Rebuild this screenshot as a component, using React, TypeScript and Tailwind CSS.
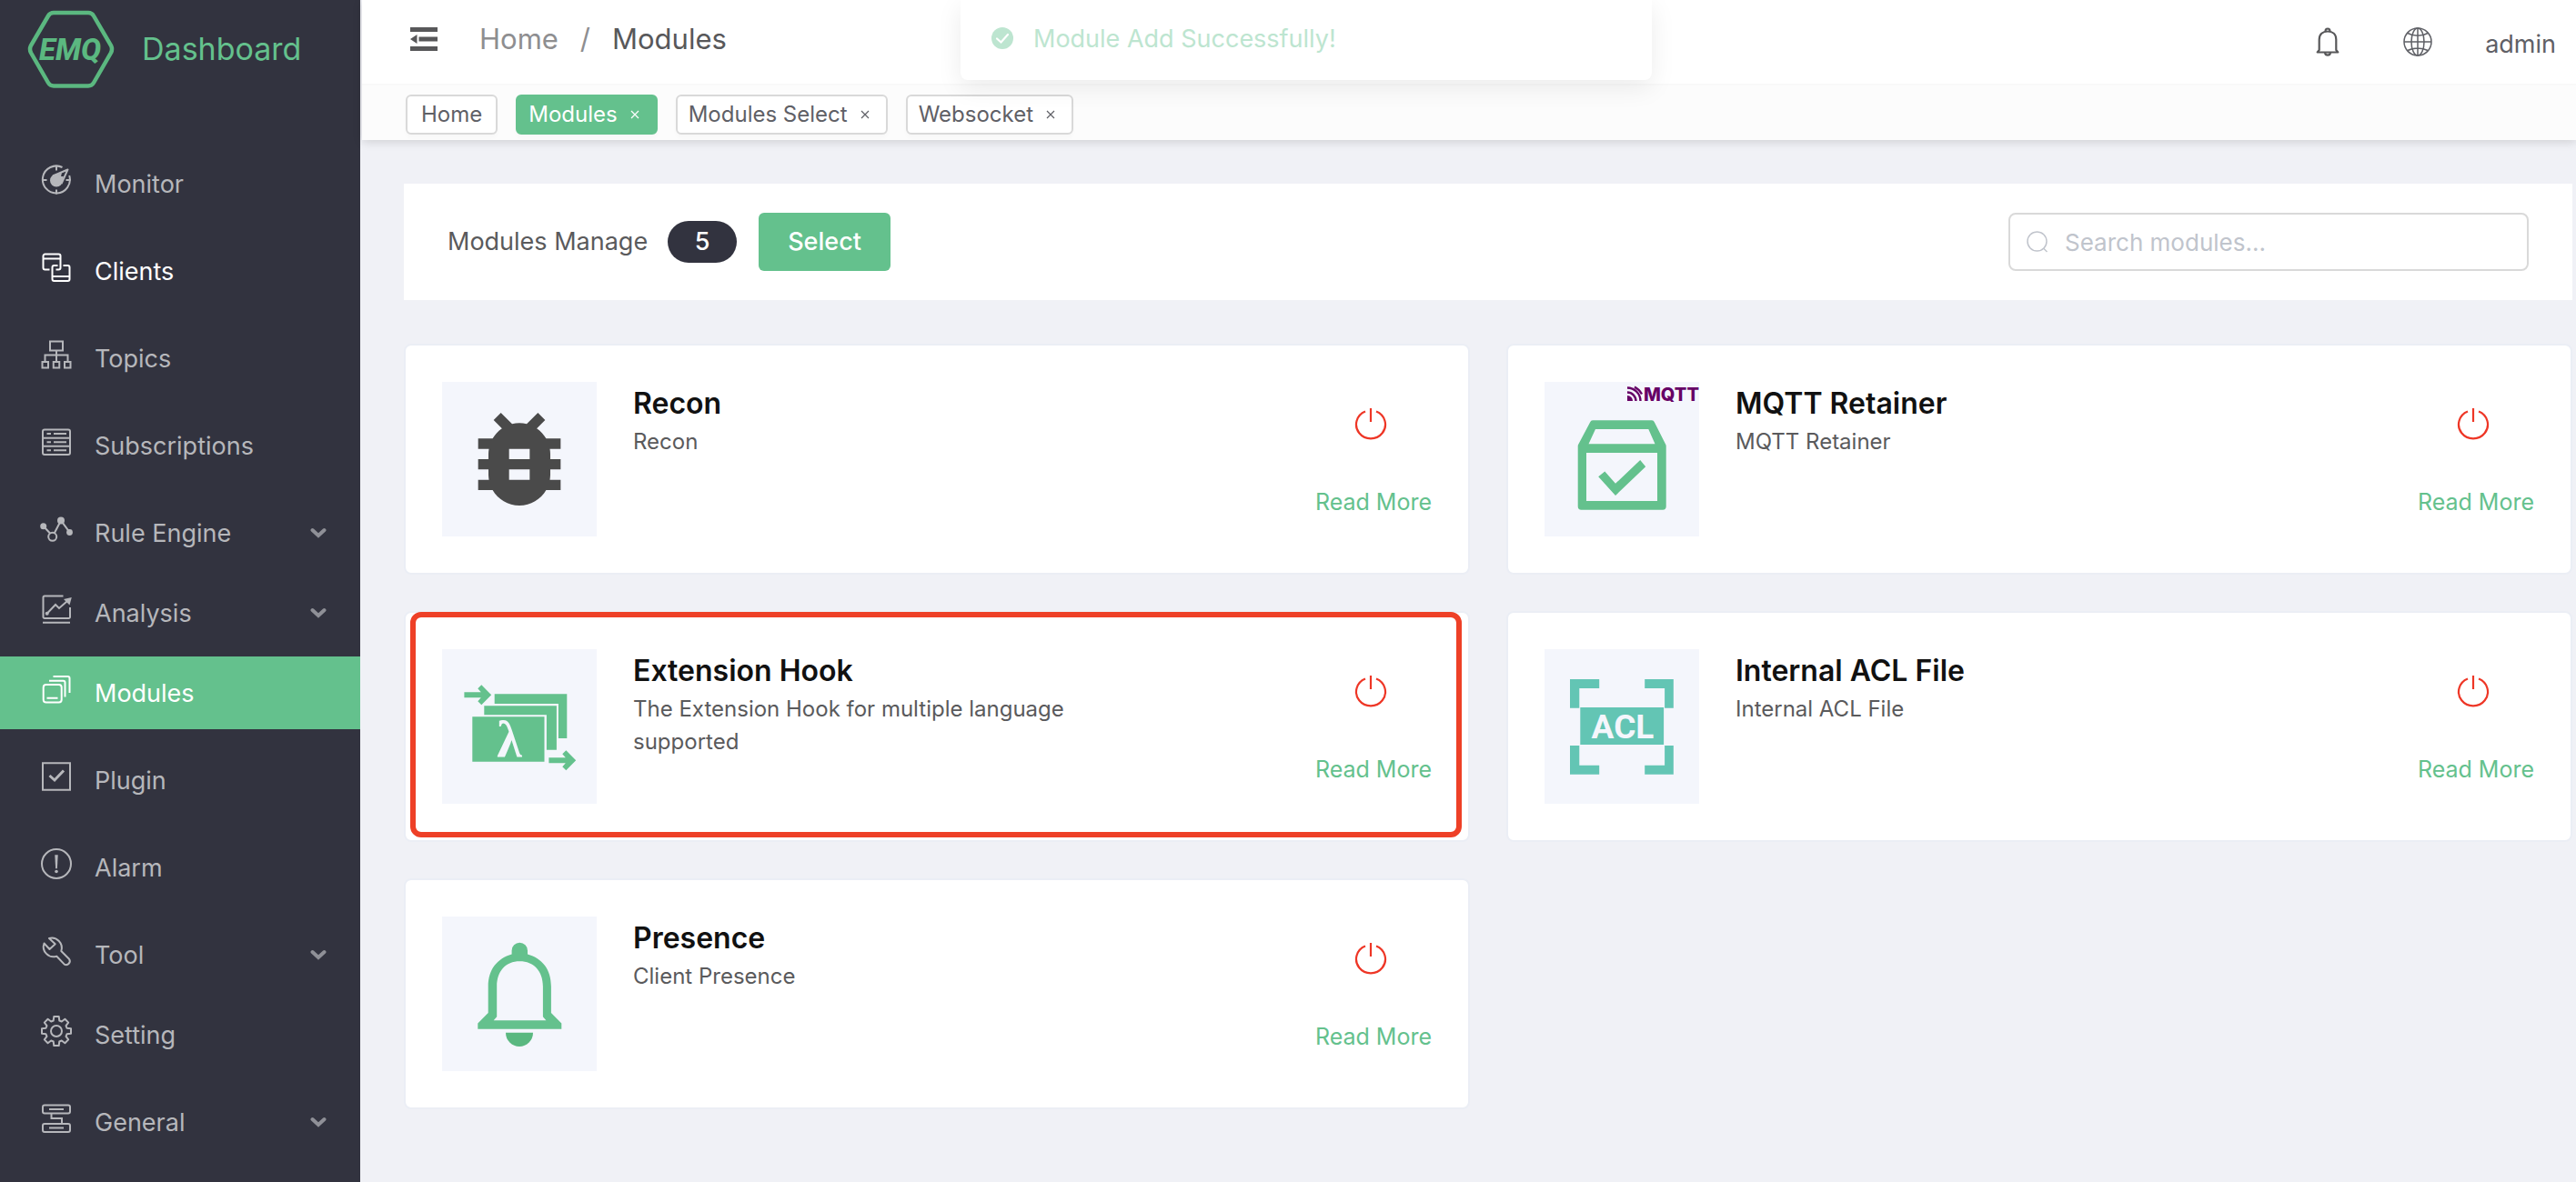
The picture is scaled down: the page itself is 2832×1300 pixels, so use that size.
import React from 'react';

type IconProps = { className?: string };

function Glyph({ children }: { children: React.ReactNode }) {
  return (
    <svg viewBox="0 0 36 36" className="mb-2 size-9 shrink-0" fill="none" stroke="currentColor" strokeWidth="2" aria-hidden="true">
      {children}
    </svg>
  );
}

const MonitorIcon = () => (
  <Glyph>
    <path d="M24.5 4A15 15 0 1 0 32.2 13" />
    <path d="M18 2.5v5M18 28.5v5M2.5 18h5M28.5 18h5" />
    <path d="M14 13.5 30.5 6.5 23.5 22" strokeLinejoin="round" />
    <circle cx="18" cy="18.5" r="6" fill="currentColor" />
    <path d="M19 12l5 -2 -1 4 3 0 -2 6z" fill="currentColor" stroke="none" />
  </Glyph>
);

const ClientsIcon = () => (
  <Glyph>
    <path d="M10.5 20.5H5.5a2 2 0 0 1-2-2V5.5a2 2 0 0 1 2-2h15a2 2 0 0 1 2 2v13a2 2 0 0 1-2 2h-3" />
    <path d="M3.5 8.5h19" />
    <path d="M25.5 16h5a2 2 0 0 1 2 2v13a2 2 0 0 1-2 2h-15a2 2 0 0 1-2-2V18a2 2 0 0 1 2-2h4" />
    <path d="M13.5 28h19" />
  </Glyph>
);

const TopicsIcon = () => (
  <Glyph>
    <path d="M11 3.5h14v10H11zM18 13.5v12M5.5 25.5v-7h25v7" />
    <path d="M2.5 26h6.5v6.5H2.5zM14.75 26h6.5v6.5h-6.5zM27 26h6.5v6.5H27z" />
  </Glyph>
);

const SubscriptionsIcon = () => (
  <Glyph>
    <rect x="3" y="4.5" width="30" height="27.5" rx="2" />
    <path d="M3 13.7h30M3 22.8h30" />
    <path d="M7.5 9h4.5M15 9h14M7.5 18.2h4.5M15 18.2h14M7.5 27.3h4.5M15 27.3h14" />
  </Glyph>
);

const RuleIcon = () => (
  <Glyph>
    <path d="M3.7 14.7 11 22.5M15.7 22.5 23 8.5 32.7 21.7" />
    <circle cx="13.7" cy="26.3" r="4.5" />
    <circle cx="3.7" cy="14.7" r="3.5" fill="currentColor" stroke="none" />
    <circle cx="23" cy="8.5" r="4" fill="currentColor" stroke="none" />
    <circle cx="32.5" cy="21.5" r="3.4" fill="currentColor" stroke="none" />
  </Glyph>
);

const AnalysisIcon = () => (
  <Glyph>
    <path d="M25.5 3.5H5a1.5 1.5 0 0 0-1.5 1.5v21.5A1.5 1.5 0 0 0 5 28h26.5a1.5 1.5 0 0 0 1.5-1.5V16M3 32.8h30" />
    <path d="M7.5 23 17 13l4 4 9-8" />
    <circle cx="7.7" cy="22.8" r="2" fill="currentColor" stroke="none" />
    <path d="M34.8 5 32.5 13.5 26 7z" fill="currentColor" stroke="none" />
  </Glyph>
);

const ModulesIcon = () => (
  <Glyph>
    <rect x="3.7" y="13" width="20" height="19.5" rx="3" />
    <path d="M7.5 27.7h12M10 8.7h15.5a2 2 0 0 1 2 2V26.5M14.5 4h16a2 2 0 0 1 2 2v16" />
  </Glyph>
);

const PluginIcon = () => (
  <Glyph>
    <path d="M3 3.3h30v29.5H3z" />
    <path d="M10.5 17l5.5 5 10-10.5" strokeWidth="3" />
  </Glyph>
);

const AlarmIcon = () => (
  <Glyph>
    <circle cx="18" cy="18" r="16" />
    <path d="M16.3 8.2h3.4L18.9 23.2h-1.8z" fill="currentColor" stroke="none" />
    <circle cx="18" cy="26.5" r="1.8" fill="currentColor" stroke="none" />
  </Glyph>
);

const ToolIcon = () => (
  <Glyph>
    <path
      d="M4.5 9.5 10.5 16 16.7 10.3 10 4A11 11 0 0 1 23.3 18L32 26.8A4 4 0 0 1 26.8 32.6L18.3 23.7A11 11 0 0 1 4.5 9.5Z"
      strokeLinejoin="round"
    />
  </Glyph>
);

function gearPath() {
  const points: string[] = [];
  for (let i = 0; i < 8; i += 1) {
    const a = (i * Math.PI) / 4 - Math.PI / 2;
    const at = (r: number, d: number) =>
      (18 + r * Math.cos(a + d)).toFixed(1) + ' ' + (18 + r * Math.sin(a + d)).toFixed(1);
    points.push(at(12, -0.28), at(16.2, -0.17), at(16.2, 0.17), at(12, 0.28));
  }
  return 'M' + points.join('L') + 'Z';
}

const SettingIcon = () => (
  <Glyph>
    <path d={gearPath()} strokeLinejoin="round" />
    <circle cx="18" cy="18" r="6" />
  </Glyph>
);

const GeneralIcon = () => (
  <Glyph>
    <rect x="3" y="3.5" width="30" height="9" rx="2" />
    <rect x="3" y="24" width="30" height="9" rx="2" />
    <path d="M10 8h16M10 28.5h16M12.5 12.5v5.5h11.5v6" />
  </Glyph>
);

const Chevron = () => (
  <svg viewBox="0 0 18 12" className="ml-auto h-3 w-[18px]" fill="none" stroke="#8f9097" strokeWidth="4" aria-hidden="true">
    <path d="M2.5 3 9 9l6.5-6" strokeLinecap="round" />
  </svg>
);

const MENU = [
  { label: 'Monitor', Icon: MonitorIcon },
  { label: 'Clients', Icon: ClientsIcon, hover: true },
  { label: 'Topics', Icon: TopicsIcon },
  { label: 'Subscriptions', Icon: SubscriptionsIcon },
  { label: 'Rule Engine', Icon: RuleIcon, sub: true },
  { label: 'Analysis', Icon: AnalysisIcon, sub: true },
  { label: 'Modules', Icon: ModulesIcon, active: true },
  { label: 'Plugin', Icon: PluginIcon },
  { label: 'Alarm', Icon: AlarmIcon },
  { label: 'Tool', Icon: ToolIcon, sub: true },
  { label: 'Setting', Icon: SettingIcon },
  { label: 'General', Icon: GeneralIcon, sub: true },
];

function Sidebar() {
  return (
    <aside className="w-[396px] shrink-0 bg-[#32333f]">
      <div className="mb-[54px] flex h-[108px] items-center gap-[30px] pl-[30px]">
        <svg viewBox="0 0 96 88" className="h-[88px] w-24" aria-label="EMQ" role="img">
          <path
            d="M29 4H67Q71 4 73 7.5L92 40Q94 44 92 48L73 81Q71 84.5 67 84.5H29Q25 84.5 23 81L4 48Q2 44 4 40L23 7.5Q25 4 29 4Z"
            fill="none"
            stroke="#5bb880"
            strokeWidth="4.5"
          />
          <text x="47" y="56" textAnchor="middle" fontSize="33" fontWeight="800" fontStyle="italic" fill="#5bb880" style={{ fontFamily: 'Roboto, sans-serif' }}>
            EMQ
          </text>
        </svg>
        <span className="text-[34px] leading-10 text-[#64c18d]">Dashboard</span>
      </div>
      <nav>
        <ul>
          {MENU.map(({ label, Icon, sub, active, hover }) => (
            <li key={label} className={sub ? 'mb-2' : 'mb-4'}>
              <a
                href="#"
                className={
                  'flex h-20 items-center gap-6 pr-[37px] pl-11 text-[27px] ' +
                  (active ? 'bg-[#64c18d] text-white' : hover ? 'text-white' : 'text-[#b6b7bb]')
                }
              >
                <Icon />
                <span className="pt-0.5">{label}</span>
                {sub && <Chevron />}
              </a>
            </li>
          ))}
        </ul>
      </nav>
    </aside>
  );
}

const Cross = () => (
  <svg viewBox="0 0 10 10" className="size-2.5" fill="none" stroke="currentColor" strokeWidth="1.2" aria-hidden="true">
    <path d="M1 1l8 8M9 1 1 9" />
  </svg>
);

const TABS = [
  { label: 'Home', closable: false, active: false },
  { label: 'Modules', closable: true, active: true },
  { label: 'Modules Select', closable: true, active: false },
  { label: 'Websocket', closable: true, active: false },
];

function Header() {
  return (
    <header className="relative z-10 ml-0.5 shadow-[0_2px_10px_rgba(0,0,0,0.14)]">
      <div className="flex h-[92px] items-center bg-white pr-[22px] pl-[53px] text-[#55565a]">
        <div className="flex items-center pb-1.5">
          <button aria-label="Collapse menu" className="mr-[46px]">
            <svg viewBox="0 0 30 26" className="h-[26px] w-[30px]" fill="#58585a" aria-hidden="true">
              <path d="M0 0h30v5H0zM9.5 10.5H30v5H9.5zM0 21h30v5H0zM7.5 8v10L0 13z" />
            </svg>
          </button>
          <nav className="flex items-center text-[31px] leading-10" aria-label="Breadcrumb">
            <a href="#" className="text-[#8e8e90]">Home</a>
            <span className="mx-6 text-[#8e8e90]">/</span>
            <span className="text-[#58585a]">Modules</span>
          </nav>
        </div>
        <button aria-label="Notifications" className="ml-auto">
          <svg viewBox="0 0 26 32" className="h-8 w-[26px]" fill="none" stroke="#58585a" strokeWidth="2.2" aria-hidden="true">
            <path d="M3.7 25V13.5C3.7 7.5 7.5 4.5 13 4.5s9.3 3 9.3 9V25l2 2.5H1.7z" strokeLinejoin="round" />
            <path d="M10.5 4.5c0-4 5-4 5 0M10 28c.5 3.5 5.5 3.5 6 0" />
          </svg>
        </button>
        <button aria-label="Language" className="ml-[70px]">
          <svg viewBox="0 0 32 32" className="size-8" fill="none" stroke="#5f6066" strokeWidth="1.5" aria-hidden="true">
            <circle cx="16" cy="16" r="15" />
            <ellipse cx="16" cy="16" rx="7" ry="15" />
            <path d="M16 1v30M1 16h30M5 6.5c6 3.5 16 3.5 22 0M5 25.5c6-3.5 16-3.5 22 0" />
          </svg>
        </button>
        <button className="ml-[58px] pt-1.5 text-[27px] leading-10 text-[#5f6066]">admin</button>
      </div>
      <div className="flex h-[62px] items-center gap-5 border-t-2 border-[#f9f9f9] bg-[#fcfcfc] pt-1 pl-12">
        {TABS.map((tab) => (
          <div
            key={tab.label}
            className={
              'flex h-11 items-center rounded-md border-2 shadow-[0_4px_4px_rgba(0,0,0,0.02)] ' +
              (tab.closable ? 'gap-3.5 pr-[18px] pl-3 ' : 'px-[15px] ') +
              (tab.active ? 'border-[#64c18d] bg-[#64c18d] text-white' : 'border-[#d9d9d9] bg-white text-[#5f6066]')
            }
          >
            <a href="#" className="text-[24px] leading-8">{tab.label}</a>
            {tab.closable && (
              <button aria-label={'Close ' + tab.label}>
                <Cross />
              </button>
            )}
          </div>
        ))}
      </div>
    </header>
  );
}

function Toast() {
  return (
    <div
      role="status"
      className="absolute top-0 left-[1056px] z-20 flex h-[88px] w-[760px] items-center gap-[22px] rounded-b-lg bg-white pl-[34px] text-[#bde5d0] shadow-[0_8px_28px_rgba(0,0,0,0.08)]"
    >
      <svg viewBox="0 0 24 24" className="mb-1 size-6" aria-hidden="true">
        <circle cx="12" cy="12" r="12" fill="currentColor" />
        <path d="M6 12.5 10.5 16.5 18 8" fill="none" stroke="#fff" strokeWidth="2.2" strokeLinecap="round" />
      </svg>
      <p className="mb-0.5 text-[27px] leading-10">Module Add Successfully!</p>
    </div>
  );
}

const BugArt = () => (
  <path
    transform="translate(17 17) scale(5.667)"
    fill="#4a4a4a"
    d="M20 8h-2.81c-.45-.78-1.07-1.45-1.82-1.96L17 4.41 15.59 3l-2.17 2.17C12.96 5.06 12.49 5 12 5c-.49 0-.96.06-1.41.17L8.41 3 7 4.41l1.62 1.63C7.88 6.55 7.26 7.22 6.81 8H4v2h2.09c-.05.33-.09.66-.09 1v1H4v2h2v1c0 .34.04.67.09 1H4v2h2.81c1.04 1.79 2.97 3 5.19 3s4.15-1.21 5.19-3H20v-2h-2.09c.05-.33.09-.66.09-1v-1h2v-2h-2v-1c0-.34-.04-.67-.09-1H20V8zm-6 8h-4v-2h4v2zm0-4h-4v-2h4v2z"
  />
);

const RetainerArt = () => (
  <>
    <path
      fill="#64c18d"
      fillRule="evenodd"
      d="M53 42.3h65a3 3 0 0 1 2.8 2L133.3 69a4 4 0 0 1 .4 2v66a3.7 3.7 0 0 1-3.7 3.7H40.4a3.7 3.7 0 0 1-3.7-3.7V71a4 4 0 0 1 .4-2L50.2 44.3a3 3 0 0 1 2.8-2ZM56 52 48.5 68.3h73L114.3 52ZM46 78v53h78V78Z"
    />
    <path fill="#64c18d" d="M59.2 104.3 66.3 98.5 78 111.8 105.2 86l6 7.3L78 125z" />
    <path d="M91 21v-6a6 6 0 0 1 6 6z" fill="#606" />
    <path d="M91 11.5a9.5 9.5 0 0 1 9.5 9.5M91 6.5A14.5 14.5 0 0 1 105.5 21M99 5.5a20 20 0 0 1 8 8" fill="none" stroke="#606" strokeWidth="2.4" />
    <text x="109" y="21" fontSize="20" fontWeight="800" fill="#606" style={{ fontFamily: 'Inter, sans-serif' }}>
      MQTT
    </text>
  </>
);

const HookArt = () => (
  <>
    <g fill="#64c18d">
      <path d="M33.3 74.3h79.2v49.4H33.3z" />
      <path d="M46.3 62.3h79.6v48.4h-11V72.3H46.3z" />
      <path d="M57.7 49.3h79.6V98h-9.4V60H57.7z" />
      <path id="hook-arrow" d="M24.4 47.3H42.8L39.3 43.3 43.3 39.3 54.2 50.3 43.3 61.3 39.3 57.3 42.8 53.3H24.4z" />
      <use href="#hook-arrow" x="93" y="72" />
    </g>
    <text x="74" y="118" textAnchor="middle" fontSize="56" fontWeight="700" fill="#f4f6fc" style={{ fontFamily: '"Liberation Serif", serif' }}>
      λ
    </text>
  </>
);

const AclArt = () => (
  <g fill="#63c5b4">
    <path d="M28 33h32.2v10H38.3v21.7H28zM110.2 33h31.6v31.7h-9.7V43h-21.9zM28 106h10.3v21.7h21.9v10H28zM132.1 106h9.7v31.7h-31.6v-10h21.9z" />
    <path d="M39.3 64h91.8v41H39.3z" />
    <text x="86" y="98" textAnchor="middle" fontSize="37" fontWeight="700" fill="#f4f6fc" style={{ fontFamily: 'Roboto, sans-serif' }}>
      ACL
    </text>
  </g>
);

const BellArt = () => (
  <>
    <path
      fill="#64c18d"
      fillRule="evenodd"
      d="M76.6 41.5V37.5a8.7 8.7 0 0 1 17.4 0V41.5C110 46 119.9 58 119.9 77v29l11.4 11.5v6.2H39.3v-6.2L50.7 106V77C50.7 58 61 46 76.6 41.5ZM85.3 49.3C70 49.3 60.2 60 60.2 77v33.3l-3.5 4h57.7l-3.5-4V77c0-17-10-27.7-25.6-27.7Z"
    />
    <path fill="#5ab880" d="M70 127.7h30a15 15.3 0 0 1-30 0z" />
  </>
);

const CARDS = [
  { title: 'Recon', text: 'Recon', Art: BugArt },
  { title: 'MQTT Retainer', text: 'MQTT Retainer', Art: RetainerArt },
  { title: 'Extension Hook', text: 'The Extension Hook for multiple language supported', Art: HookArt, marked: true },
  { title: 'Internal ACL File', text: 'Internal ACL File', Art: AclArt },
  { title: 'Presence', text: 'Client Presence', Art: BellArt },
];

function Power({ className }: IconProps) {
  return (
    <svg viewBox="0 0 36 36" className={className} fill="none" stroke="#ee3626" strokeWidth="2.2" aria-hidden="true">
      <path d="M18 1v15M12 4.5a16 15.5 0 1 0 12 0" />
    </svg>
  );
}

function Card({ title, text, Art, marked }: (typeof CARDS)[number]) {
  return (
    <article className="relative flex rounded-lg border-2 border-[#ebeef5] bg-white p-10">
      <svg viewBox="0 0 170 170" className="size-[170px] shrink-0 bg-[#f4f6fc]" role="img" aria-label={title}>
        <Art />
      </svg>
      <div className="ml-10 max-w-[500px] pt-1">
        <h2 className="text-[32px] leading-10 font-semibold text-[#111]">{title}</h2>
        <p className="mt-1 text-[24px] leading-9 text-[#5a5a5c]">{text}</p>
      </div>
      <div className="ml-auto flex flex-col items-center pt-7">
        <button aria-label={'Turn off ' + title} className="mr-1.5">
          <Power className="size-9" />
        </button>
        <a href="#" className="mt-12 text-[25px] leading-10 text-[#64c18d]">Read More</a>
      </div>
      {marked && <div className="pointer-events-none absolute -top-px right-[7px] bottom-[3px] left-[5px] rounded-xl border-6 border-[#ee4027]" />}
    </article>
  );
}

export default function App() {
  return (
    <div className="relative flex min-h-screen bg-[#f0f1f6] font-['Inter',sans-serif]">
      <Sidebar />
      <div className="flex min-w-0 flex-1 flex-col">
        <Header />
        <main className="pt-12 pr-1 pb-12 pl-12">
          <section className="mb-12 flex h-32 items-center bg-white px-12">
            <h1 className="text-[27px] leading-10 text-[#5a5a5c]">Modules Manage</h1>
            <span className="ml-[22px] flex h-[46px] w-[76px] items-center justify-center rounded-full bg-[#32333f] text-[27px] font-medium text-white">5</span>
            <button className="ml-6 h-16 rounded-md bg-[#64c18d] px-8 text-[27px] font-medium text-white">Select</button>
            <label className="ml-auto flex h-16 w-[572px] items-center gap-[18px] rounded-lg border-2 border-[#d9d9d9] px-[18px]">
              <svg viewBox="0 0 24 24" className="size-6 shrink-0" fill="none" stroke="#c0c4cc" strokeWidth="1.5" aria-hidden="true">
                <circle cx="11.5" cy="11.5" r="10.5" />
                <path d="M18.5 19l4 4" />
              </svg>
              <input
                type="text"
                aria-label="Search modules"
                placeholder="Search modules..."
                className="min-w-0 flex-1 bg-transparent text-[26px] text-[#5a5a5c] outline-none placeholder:text-[#c0c4cc]"
              />
            </label>
          </section>
          <section className="grid grid-cols-2 gap-10">
            {CARDS.map((card) => (
              <Card key={card.title} {...card} />
            ))}
          </section>
        </main>
      </div>
      <Toast />
    </div>
  );
}
